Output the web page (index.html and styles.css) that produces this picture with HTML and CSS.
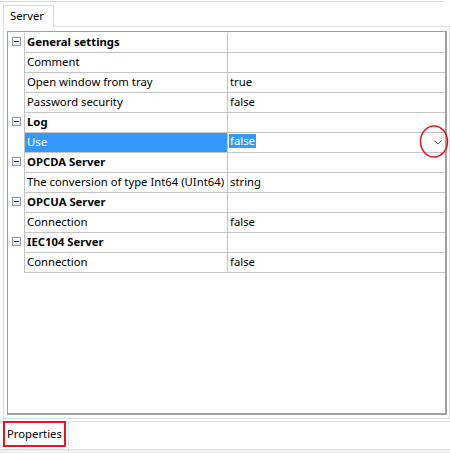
FILE: index.html
```html
<!DOCTYPE html>
<html>
<head>
<meta charset="utf-8">
<link rel="stylesheet" href="styles.css">
</head>
<body>
<div class="rule"></div>
<div class="tabs"><div class="tab">Server</div></div>
<div class="panel">
  <div class="grid">
    <div class="row cat"><div class="gutter"><span class="minus"></span></div><div class="name">General settings</div><div class="value"></div></div>
    <div class="row"><div class="gutter"></div><div class="name">Comment</div><div class="value"></div></div>
    <div class="row"><div class="gutter"></div><div class="name">Open window from tray</div><div class="value">true</div></div>
    <div class="row"><div class="gutter"></div><div class="name">Password security</div><div class="value">false</div></div>
    <div class="row cat"><div class="gutter"><span class="minus"></span></div><div class="name">Log</div><div class="value"></div></div>
    <div class="row sel"><div class="gutter"></div><div class="name">Use</div><div class="value"><span class="hl">false</span><svg class="chev" width="8" height="5" viewBox="0 0 8 5"><path d="M0.5 0.5 L4 4 L7.5 0.5" fill="none" stroke="#5a5a5a" stroke-width="1"/></svg></div></div>
    <div class="row cat"><div class="gutter"><span class="minus"></span></div><div class="name">OPCDA Server</div><div class="value"></div></div>
    <div class="row"><div class="gutter"></div><div class="name">The conversion of type Int64 (UInt64)</div><div class="value">string</div></div>
    <div class="row cat"><div class="gutter"><span class="minus"></span></div><div class="name">OPCUA Server</div><div class="value"></div></div>
    <div class="row"><div class="gutter"></div><div class="name">Connection</div><div class="value">false</div></div>
    <div class="row cat"><div class="gutter"><span class="minus"></span></div><div class="name">IEC104 Server</div><div class="value"></div></div>
    <div class="row"><div class="gutter"></div><div class="name">Connection</div><div class="value">false</div></div>
  </div>
</div>
<div class="strip"><div class="ptab">Properties</div></div>
<div class="footer"><div class="fcell"></div></div>
<div class="mark-box"></div>
<svg class="mark-ellipse" width="30" height="34" viewBox="0 0 30 34"><ellipse cx="15" cy="16.5" rx="13.5" ry="15.5" fill="none" stroke="#e8141e" stroke-width="1.5"/></svg>
</body>
</html>
```
FILE: styles.css
```css
html, body {
  margin: 0;
  padding: 0;
  background: #ffffff;
}
body {
  width: 450px;
  height: 453px;
  overflow: hidden;
  position: relative;
  font-family: "Noto Sans", "Open Sans", sans-serif;
  font-size: 11.3px;
  color: #000;
}
.rule {
  margin-top: 1px;
  height: 1px;
  width: 445px;
  background: #dadada;
}
.tabs {
  display: flex;
  margin-top: 3px;
  padding-left: 3px;
}
.tab {
  position: relative;
  z-index: 1;
  box-sizing: border-box;
  width: 51px;
  height: 22px;
  margin-bottom: -1px;
  border: 1px solid #d9d9d9;
  border-bottom: none;
  background: #fff;
  padding-left: 6px;
  line-height: 19px;
}
.panel {
  box-sizing: border-box;
  margin-left: 3px;
  width: 447px;
  height: 393px;
  border: 1px solid #dcdcdc;
  padding: 4px 2px 3px 3px;
}
.grid {
  box-sizing: border-box;
  width: 440px;
  height: 384px;
  border-top: 1px solid #a0a0a0;
  border-left: 1px solid #a0a0a0;
  border-right: 2px solid #a0a0a0;
  border-bottom: 2px solid #a0a0a0;
  padding-top: 1px;
}
.row {
  display: flex;
  height: 20px;
}
.gutter {
  width: 16px;
  flex: none;
  position: relative;
}
.name, .value {
  box-sizing: border-box;
  height: 20px;
  border-left: 1px solid #c4c4c4;
  border-bottom: 1px solid #c4c4c4;
  padding-left: 2px;
  line-height: 18px;
  white-space: nowrap;
  overflow: hidden;
}
.name {
  width: 203px;
  flex: none;
}
.value {
  flex: 1;
  display: flex;
  align-items: flex-start;
  justify-content: space-between;
}
.cat .name {
  font-weight: bold;
}
.sel .name {
  background: #3399ff;
  background-clip: padding-box;
  color: #fff;
}
.hl {
  background: #3399ff;
  color: #fff;
  line-height: 14px;
  height: 14px;
  padding: 0 1px;
  margin-left: -1px;
  margin-top: 1px;
}
.chev {
  margin-right: 3px;
  align-self: center;
}
.minus {
  position: absolute;
  left: 4px;
  top: 4px;
  box-sizing: border-box;
  width: 9px;
  height: 9px;
  border: 1px solid #8f9aa8;
  background: linear-gradient(#ffffff, #dfe3e8);
}
.minus::after {
  content: "";
  position: absolute;
  left: 1px;
  top: 3px;
  width: 5px;
  height: 1px;
  background: #1e2a3a;
}
.strip {
  margin-top: 2px;
  border-top: 1px solid #dcdcdc;
  height: 27px;
  display: flex;
}
.ptab {
  box-sizing: border-box;
  width: 69px;
  height: 27px;
  border-right: 1px solid #dcdcdc;
  padding-left: 7px;
  line-height: 24px;
}
.footer {
  border-top: 1px solid #dcdcdc;
  background: #f0f0f0;
  height: 4px;
}
.fcell {
  box-sizing: border-box;
  width: 69px;
  height: 4px;
  border-right: 1px solid #dcdcdc;
}
.mark-box {
  position: absolute;
  left: 3px;
  top: 421px;
  box-sizing: border-box;
  width: 63px;
  height: 26px;
  border: 2px solid #e8141e;
}
.mark-ellipse {
  position: absolute;
  left: 419px;
  top: 125px;
}
```
